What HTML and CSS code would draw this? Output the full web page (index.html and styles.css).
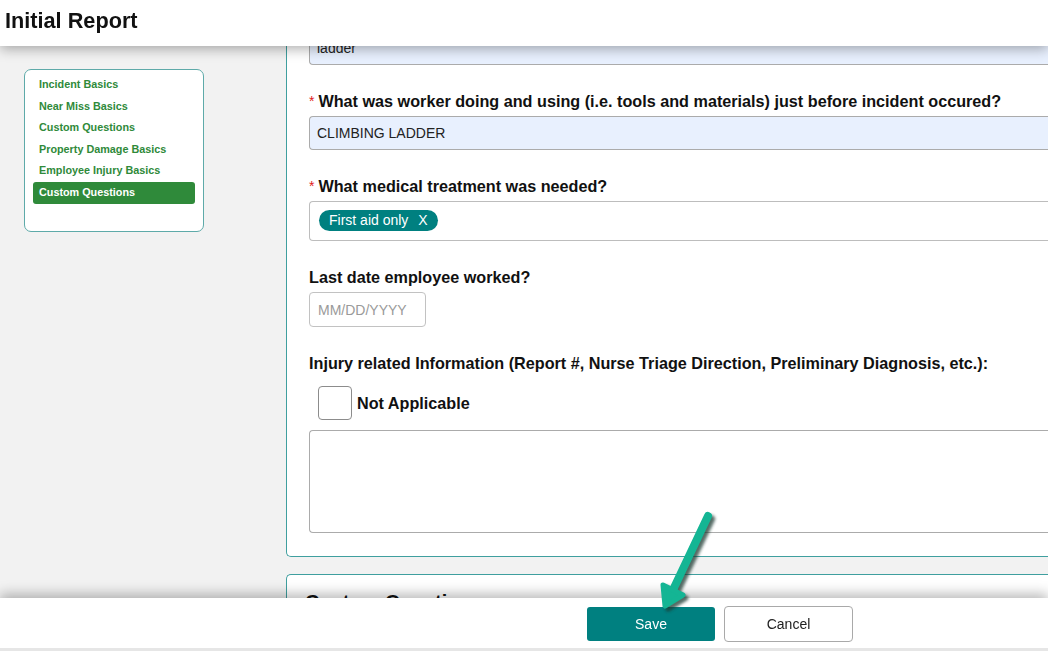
FILE: index.html
```html
<!DOCTYPE html>
<html lang="en">
<head>
<meta charset="utf-8">
<title>Initial Report</title>
<link rel="stylesheet" href="styles.css">
</head>
<body>
<header class="topbar">
  <h1 class="title">Initial Report</h1>
</header>

<div class="layout">
  <aside class="side">
    <nav class="nav">
      <a class="nav-item">Incident Basics</a>
      <a class="nav-item">Near Miss Basics</a>
      <a class="nav-item">Custom Questions</a>
      <a class="nav-item">Property Damage Basics</a>
      <a class="nav-item">Employee Injury Basics</a>
      <a class="nav-item active">Custom Questions</a>
    </nav>
  </aside>

  <main class="content">
    <section class="card card-form">
      <div class="field">
        <input class="control filled" type="text" value="ladder" readonly>
      </div>
      <div class="field">
        <label class="label"><span class="req">*</span>What was worker doing and using (i.e. tools and materials) just before incident occured?</label>
        <input class="control filled" type="text" value="CLIMBING LADDER" readonly>
      </div>
      <div class="field">
        <label class="label"><span class="req">*</span>What medical treatment was needed?</label>
        <div class="control multi">
          <span class="chip">First aid only<span class="chip-x">X</span></span>
        </div>
      </div>
      <div class="field">
        <label class="label">Last date employee worked?</label>
        <input class="control date" type="text" placeholder="MM/DD/YYYY">
      </div>
      <div class="field last">
        <label class="label">Injury related Information (Report #, Nurse Triage Direction, Preliminary Diagnosis, etc.):</label>
        <div class="check-row">
          <span class="checkbox"></span>
          <span class="check-label">Not Applicable</span>
        </div>
        <textarea class="control area"></textarea>
      </div>
    </section>

    <section class="card card-next">
      <h2 class="card-title">Custom Questions</h2>
    </section>
  </main>
</div>

<footer class="footer">
  <button class="btn btn-save">Save</button>
  <button class="btn btn-cancel">Cancel</button>
</footer>

<svg class="arrow" width="100" height="120" viewBox="0 0 100 120">
  <defs>
    <filter id="sh" x="-30%" y="-30%" width="160%" height="160%">
      <feGaussianBlur stdDeviation="1.6"/>
    </filter>
  </defs>
  <g transform="translate(3,3)" filter="url(#sh)" opacity="0.75">
    <line x1="68" y1="12" x2="32" y2="88" stroke="#1f3a33" stroke-width="8" stroke-linecap="round"/>
    <polygon points="25,102 23,81 43,91" fill="#1f3a33" stroke="#1f3a33" stroke-width="5" stroke-linejoin="round"/>
  </g>
  <line x1="68" y1="12" x2="32" y2="88" stroke="#14b594" stroke-width="8" stroke-linecap="round"/>
  <polygon points="25,102 23,81 43,91" fill="#14b594" stroke="#14b594" stroke-width="5" stroke-linejoin="round"/>
</svg>
</body>
</html>
```

FILE: styles.css
```css
html, body {
  margin: 0;
  padding: 0;
  height: 100%;
  overflow: hidden;
}

body {
  font-family: "Liberation Sans", Arial, sans-serif;
  background: #f2f2f2;
  color: #111;
}

.topbar {
  position: fixed;
  top: 0;
  left: 0;
  right: 0;
  height: 46px;
  background: #fff;
  z-index: 10;
  box-shadow: 0 3px 12px rgba(0, 0, 0, 0.32);
}

.title {
  margin: 0;
  padding: 9px 0 0 5px;
  font-size: 21.7px;
  line-height: 24px;
  font-weight: bold;
  color: #111;
}

.layout {
  display: flex;
  height: 100%;
  overflow: hidden;
}

.side {
  flex: none;
  width: 286px;
  box-sizing: border-box;
  padding: 69px 0 0 24px;
}

.nav {
  width: 180px;
  height: 163px;
  box-sizing: border-box;
  background: #fff;
  border: 1px solid #5eaaa9;
  border-radius: 7px;
  padding: 4px 8px 0 8px;
  display: flex;
  flex-direction: column;
}

.nav-item {
  display: block;
  height: 21.6px;
  line-height: 21.6px;
  padding-left: 6px;
  font-size: 10.8px;
  font-weight: bold;
  color: #2f8a3a;
  border-radius: 3px;
}

.nav-item.active {
  background: #2f8a3a;
  color: #fff;
}

.content {
  flex: 1;
  min-width: 0;
  display: flex;
  flex-direction: column;
}

.card {
  background: #fff;
  border: 1px solid #3f9f9f;
  border-right: none;
  border-radius: 5px 0 0 5px;
}

.card-form {
  padding: 30px 0 23px 22px;
}

.field {
  display: flex;
  flex-direction: column;
  margin-bottom: 26px;
}

.field.last {
  margin-bottom: 0;
}

.label {
  display: block;
  height: 20px;
  line-height: 20px;
  font-size: 16.2px;
  font-weight: bold;
  color: #111;
  margin-bottom: 5px;
  white-space: nowrap;
}

.req {
  color: #e0201b;
  font-size: 14px;
  font-weight: normal;
  margin-right: 4px;
  position: relative;
  top: -1px;
}

.control {
  display: block;
  box-sizing: border-box;
  width: 100%;
  border: 1px solid #ababab;
  border-right: none;
  border-radius: 4px 0 0 4px;
  background: #fff;
  font-family: "Liberation Sans", Arial, sans-serif;
  font-size: 14px;
  color: #222;
  margin: 0;
  outline: none;
  -webkit-appearance: none;
  appearance: none;
}

input.control {
  height: 34px;
  padding: 0 7px;
}

.control.filled {
  background: #e8f0fe;
}

.control.multi {
  height: 40px;
  padding: 8px 0 0 9px;
  border-color: #bdbdbd;
}

.chip {
  display: inline-flex;
  align-items: center;
  height: 21px;
  padding: 0 10px;
  background: #008080;
  color: #fff;
  border-radius: 11px;
  font-size: 14px;
  line-height: 21px;
}

.chip-x {
  margin-left: 10px;
}

input.control.date {
  width: 117px;
  height: 35px;
  padding: 0 8px;
  border: 1px solid #c2c2c2;
  border-radius: 4px;
}

.control.date::placeholder {
  color: #9a9a9a;
}

.check-row {
  display: flex;
  align-items: center;
  margin-top: 8px;
  margin-bottom: 10px;
  padding-left: 9px;
}

.checkbox {
  width: 34px;
  height: 34px;
  box-sizing: border-box;
  border: 1.5px solid #8c8c8c;
  border-radius: 4px;
  background: #fff;
}

.check-label {
  margin-left: 5px;
  font-size: 16.2px;
  font-weight: bold;
  color: #111;
}

.control.area {
  height: 103px;
  resize: none;
  padding: 6px 8px;
}

.card-next {
  margin-top: 17px;
  flex: 1;
  border-bottom: none;
  border-radius: 5px 0 0 0;
  padding: 16px 0 0 18px;
  overflow: hidden;
}

.card-title {
  margin: 0;
  font-size: 20px;
  line-height: 23px;
  font-weight: bold;
  color: #111;
}

.footer {
  position: fixed;
  left: 0;
  right: 0;
  bottom: 0;
  height: 53px;
  box-sizing: border-box;
  background: #fff;
  border-bottom: 3px solid #e6e6e6;
  z-index: 10;
  box-shadow: 0 -4px 12px rgba(0, 0, 0, 0.28);
  display: flex;
  align-items: flex-start;
  gap: 9px;
  padding: 8px 0 0 587px;
}

.btn {
  font-family: "Liberation Sans", Arial, sans-serif;
  font-size: 14px;
  width: 128px;
  box-sizing: border-box;
  cursor: pointer;
  margin: 0;
}

.btn-save {
  height: 34px;
  margin-top: 1px;
  background: #008080;
  color: #fff;
  border: none;
  border-radius: 3px;
}

.btn-cancel {
  height: 36px;
  width: 129px;
  background: #fff;
  color: #222;
  border: 1px solid #a9a9a9;
  border-radius: 4px;
}

.arrow {
  position: absolute;
  left: 640px;
  top: 504px;
  z-index: 20;
  overflow: visible;
}
```
